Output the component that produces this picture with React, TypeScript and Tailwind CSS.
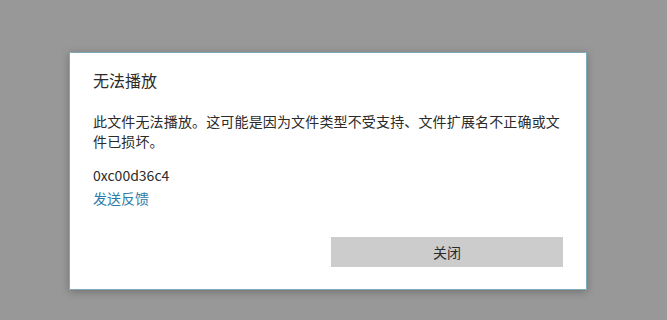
import React from "react";

export default function App() {
  const font = { fontFamily: '"Noto Sans CJK SC", "Noto Sans", sans-serif' };
  return (
    <div className="h-[320px] w-[667px] bg-[#989898] flex items-start" style={font}>
      <div className="ml-[69px] mt-[52px] w-[518px] h-[238px] bg-white border border-[#7eaabb] shadow-[0_2px_8px_rgba(0,0,0,0.25)] flex flex-col pl-[23px] pr-[23px] pt-[16px] text-[#2b2b2b]">
        <div className="text-[16px] leading-[22px]">无法播放</div>
        <div className="mt-[20px] text-[14px] leading-[20px] tracking-[0.15px]">
          此文件无法播放。这可能是因为文件类型不受支持、文件扩展名不正确或文件已损坏。
        </div>
        <div className="mt-[13px] text-[14px] leading-[22px]">0xc00d36c4</div>
        <div className="mt-[1px] text-[14px] leading-[22px] text-[#2f7ba8]">发送反馈</div>
        <div className="mt-[28px] flex justify-end">
          <button className="w-[232px] h-[30px] bg-[#cccccc] text-[14px] text-[#2b2b2b] flex items-center justify-center">
            关闭
          </button>
        </div>
      </div>
    </div>
  );
}
